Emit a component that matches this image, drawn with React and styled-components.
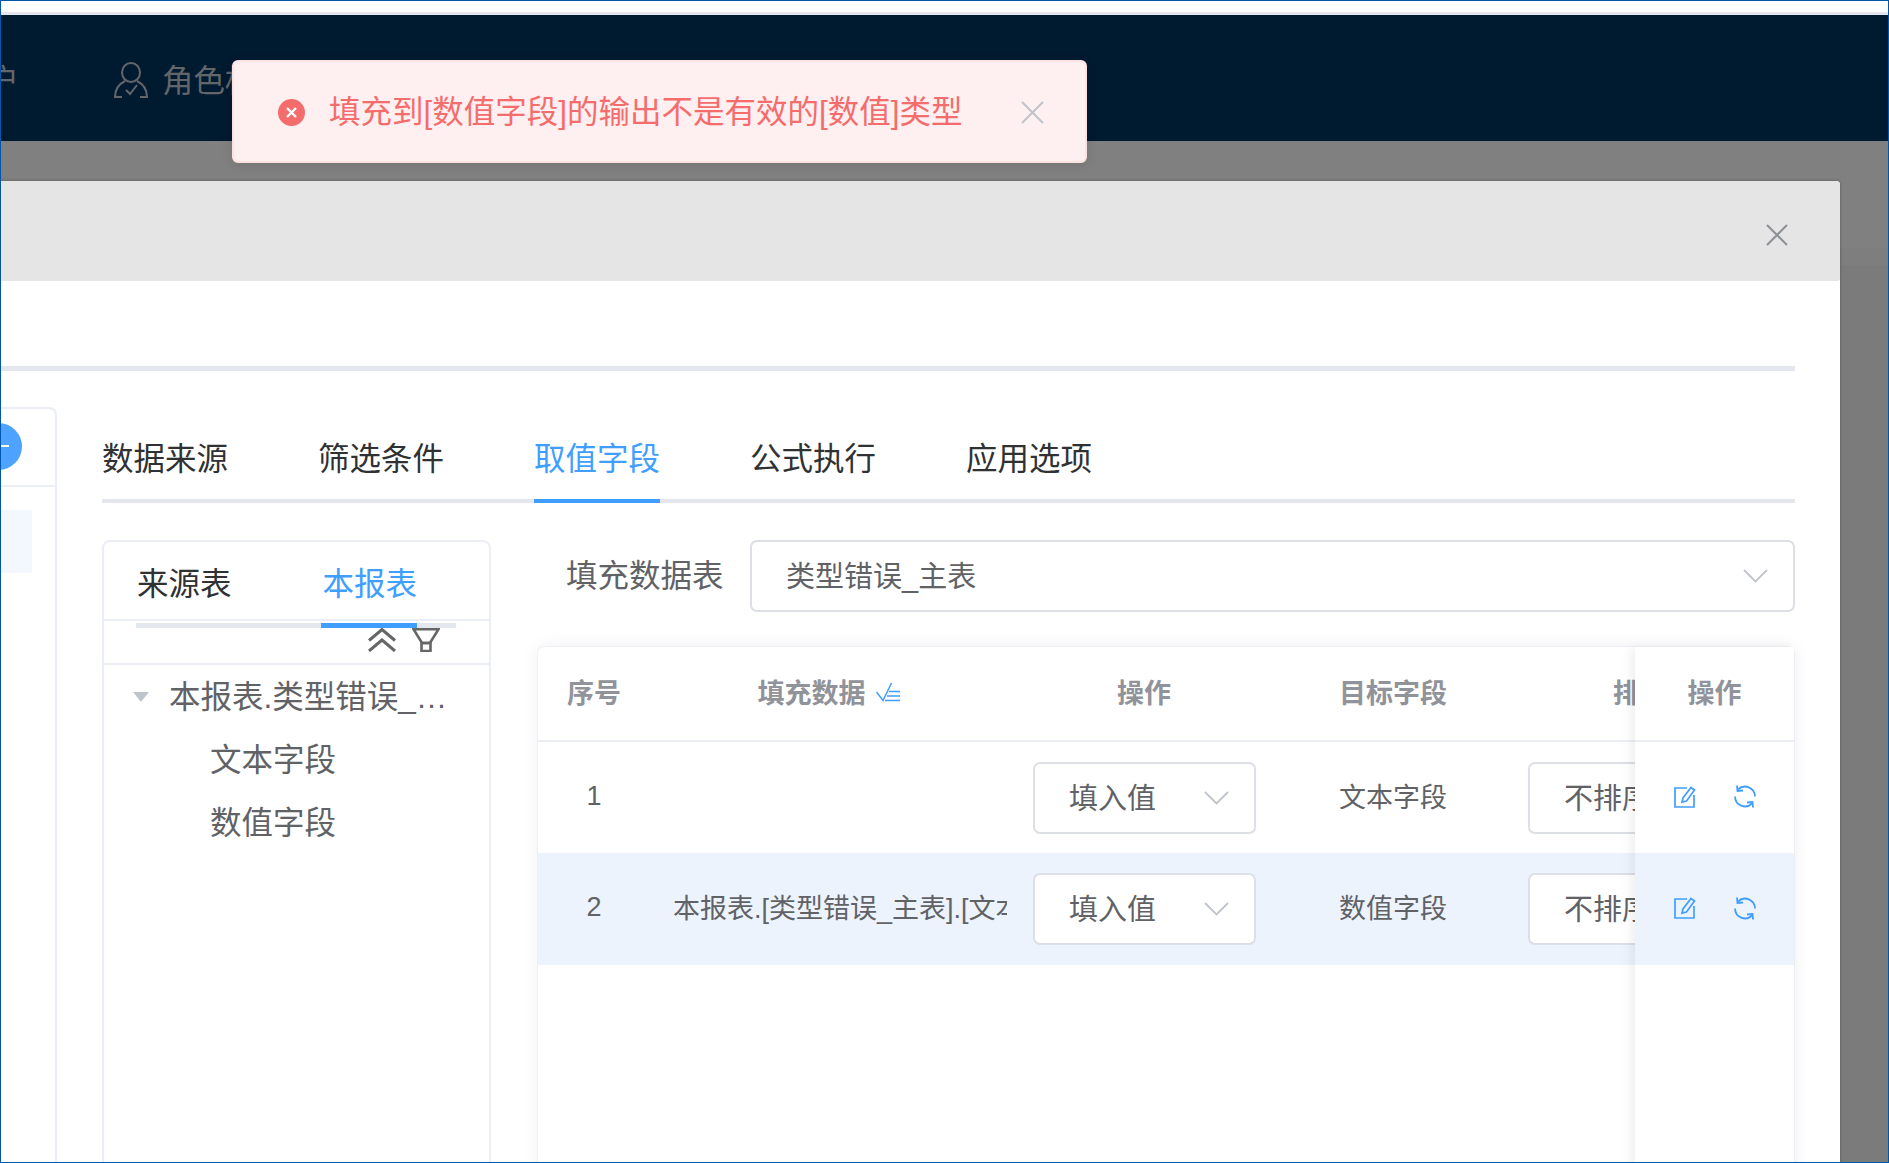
import React from 'react';
import styled, { createGlobalStyle } from 'styled-components';

const GlobalStyle = createGlobalStyle`
  html, body {
    margin: 0;
    padding: 0;
    background: #fff;
  }
  * {
    box-sizing: border-box;
  }
  body {
    font-family: "Liberation Sans", "Noto Sans CJK SC", sans-serif;
    color: #606266;
  }
`;

const Frame = styled.div`
  position: relative;
  width: 1889px;
  height: 1163px;
  border: 1px solid #0056a8;
  overflow: hidden;
  display: flex;
  flex-direction: column;
  background: #fff;
`;

const TopStrip = styled.div`
  height: 14px;
  flex-shrink: 0;
  background: #fff;
  border-bottom: 3px solid #e4e7ed;
`;

const NavBar = styled.nav`
  height: 126px;
  flex-shrink: 0;
  background: #001a30;
  display: flex;
  align-items: center;
  padding-top: 6px;
  color: #62666b;
  font-size: 31.5px;
  line-height: 40px;
`;

const NavItem = styled.div`
  display: flex;
  align-items: center;
  gap: 14px;
  white-space: nowrap;
  margin-left: ${(p) => p.$offset}px;
`;

const NavIcon = styled.span`
  display: flex;
  margin-top: -2px;
`;

const Backdrop = styled.div`
  flex: 1;
  min-height: 0;
  display: flex;
  align-items: flex-start;
  padding: 40px 48px 0 0;
  background: linear-gradient(#808080 0 107px, #7e7e7e 107px 124px, #7b7b7b 124px);
  overflow: hidden;
`;

const Modal = styled.section`
  flex: 1;
  min-width: 0;
  height: 1100px;
  background: #fff;
  border-radius: 0 4px 0 0;
  box-shadow: 0 0 3px rgba(0, 0, 0, 0.35);
`;

const ModalHeader = styled.header`
  height: 100px;
  background: #e5e5e5;
  border-radius: 0 4px 3px 0;
  display: flex;
  align-items: center;
  justify-content: flex-end;
  padding: 8px 52px 0 0;
  color: #8d9096;
`;

const ModalBody = styled.div`
  padding: 85px 45px 0 0;
`;

const Divider = styled.div`
  height: 5px;
  background: #e4e7ed;
`;

const ContentRow = styled.div`
  display: flex;
  margin-top: 36px;
`;

const SidePanel = styled.aside`
  width: 56px;
  flex-shrink: 0;
  height: 760px;
  border-top: 2px solid #ebeef5;
  border-right: 2px solid #ebeef5;
  border-radius: 0 8px 0 0;
`;

const SideHead = styled.div`
  height: 78px;
  padding-bottom: 2px;
  border-bottom: 2px solid #ebeef5;
  display: flex;
  align-items: center;
  overflow: hidden;
`;

const AddButton = styled.div`
  width: 47px;
  height: 47px;
  border-radius: 50%;
  flex-shrink: 0;
  margin-left: -26px;
  background: #4da3ff;
  display: flex;
  align-items: center;
  justify-content: center;
`;

const AddBar = styled.span`
  width: 20px;
  height: 2px;
  background: #fff;
`;

const SideActive = styled.div`
  width: 31px;
  height: 63px;
  margin-top: 23px;
  background: #f3f8fe;
`;

const Main = styled.div`
  flex: 1;
  min-width: 0;
  margin-left: 45px;
`;

const TabList = styled.div`
  height: 96px;
  display: flex;
  gap: 90px;
  border-bottom: 4px solid #e4e7ed;
`;

const Tab = styled.div`
  height: 96px;
  font-size: 31.5px;
  line-height: 104px;
  white-space: nowrap;
  color: ${(p) => (p.$active ? '#409eff' : '#303133')};
  border-bottom: 4px solid ${(p) => (p.$active ? '#409eff' : 'transparent')};
`;

const Panes = styled.div`
  display: flex;
  margin-top: 37px;
`;

const SourceCard = styled.div`
  width: 389px;
  height: 700px;
  flex-shrink: 0;
  border: 2px solid #ebeef5;
  border-radius: 8px 8px 0 0;
`;

const CardTabs = styled.div`
  height: 79px;
  display: flex;
  gap: 91px;
  padding: 7px 0 0 33px;
  align-items: center;
  border-bottom: 2px solid #ebeef5;
`;

const CardTab = styled.div`
  font-size: 31.5px;
  line-height: 40px;
  color: ${(p) => (p.$active ? '#409eff' : '#303133')};
`;

const CardTrack = styled.div`
  height: 5px;
  margin: 2px 33px 0 32px;
  background: #e4e7ed;
`;

const CardThumb = styled.div`
  width: 96px;
  height: 5px;
  margin-left: 185px;
  background: #409eff;
`;

const TreeTools = styled.div`
  height: 37px;
  display: flex;
  justify-content: flex-end;
  gap: 16px;
  padding-right: 49px;
  border-bottom: 2px solid #ebeef5;
  color: #666;
`;

const TreeRow = styled.div`
  height: 63px;
  display: flex;
  align-items: center;
  font-size: 31.5px;
  line-height: 40px;
  color: #606266;
  padding-left: ${(p) => p.$indent}px;
`;

const TreeCaret = styled.span`
  width: 0;
  height: 0;
  flex-shrink: 0;
  margin-right: 20px;
  border-left: 8px solid transparent;
  border-right: 8px solid transparent;
  border-top: 10px solid #c0c4cc;
`;

const TreeLabel = styled.span`
  width: 282px;
  overflow: hidden;
  white-space: nowrap;
  text-overflow: ellipsis;
`;

const RightPane = styled.div`
  flex: 1;
  min-width: 0;
  margin-left: 47px;
`;

const FormRow = styled.div`
  display: flex;
  align-items: center;
  padding-left: 28px;
`;

const FormLabel = styled.label`
  width: 184px;
  flex-shrink: 0;
  font-size: 31.5px;
  line-height: 40px;
  color: #606266;
`;

const Select = styled.div`
  flex: ${(p) => (p.$wide ? 1 : '0 0 223px')};
  height: 72px;
  display: flex;
  align-items: center;
  justify-content: space-between;
  padding: 0 25px 0 34px;
  background: #fff;
  border: 2px solid #dcdfe6;
  border-radius: 7px;
  font-size: 29px;
  color: #606266;
  white-space: nowrap;
`;

const SelectText = styled.span`
  margin-bottom: 4px;
`;

const TableCard = styled.div`
  display: flex;
  height: 560px;
  margin: 35px 1px 0 0;
  border-radius: 6px 6px 0 0;
  background: #fff;
  box-shadow: 0 0 0 1px #eef0f5, 0 0 18px rgba(0, 0, 0, 0.07);
`;

const TableMain = styled.div`
  flex: 1;
  min-width: 0;
  overflow: hidden;
`;

const TableFixed = styled.div`
  width: 159px;
  flex-shrink: 0;
  background: #fff;
  box-shadow: -5px 0 10px rgba(0, 0, 0, 0.06);
  position: relative;
  z-index: 1;
`;

const columns = '112px 369px 250px 248px 246px';

const HeadRow = styled.div`
  display: grid;
  grid-template-columns: ${(p) => p.$cols};
  height: 95px;
  border-bottom: 2px solid #ebeef5;
`;

const BodyRow = styled.div`
  display: grid;
  grid-template-columns: ${(p) => p.$cols};
  height: ${(p) => (p.$selected ? 112 : 111)}px;
  background: ${(p) => (p.$selected ? '#ecf3fd' : '#fff')};
`;

const HeadCell = styled.div`
  display: flex;
  align-items: center;
  justify-content: center;
  gap: 10px;
  padding: 0 ${(p) => p.$pr || 0}px 4px 0;
  font-size: 27px;
  font-weight: 600;
  color: #909399;
  white-space: nowrap;
`;

const Cell = styled.div`
  display: flex;
  align-items: center;
  justify-content: center;
  min-width: 0;
  padding-bottom: 5px;
  font-size: 27px;
  color: #606266;
  white-space: nowrap;
`;

const IndexCell = styled(Cell)`
  padding-bottom: 3px;
`;

const DataCell = styled(Cell)`
  justify-content: flex-start;
  padding: 0 12px 5px 23px;
`;

const DataText = styled.span`
  display: block;
  overflow: hidden;
`;

const SelectCell = styled(Cell)`
  justify-content: flex-start;
  padding: 0 0 0 ${(p) => p.$pl}px;
`;

const ActionCell = styled(Cell)`
  gap: 38px;
  color: #409eff;
  padding: 0 0 2px 0;
`;

const Toast = styled.div`
  position: absolute;
  left: 231px;
  top: 59px;
  z-index: 5;
  width: 855px;
  height: 103px;
  display: flex;
  align-items: center;
  padding: 1px 0 0 44px;
  background: #fef0f0;
  border: 2px solid #fde2e2;
  border-radius: 6px;
  box-shadow: 0 2px 12px rgba(0, 0, 0, 0.1);
`;

const ToastText = styled.span`
  margin-left: 24px;
  font-size: 31.5px;
  line-height: 40px;
  color: #f56c6c;
  white-space: nowrap;
`;

const ToastClose = styled.span`
  display: flex;
  margin-left: 58px;
  color: #c0c4cc;
`;

const Arrow = () => (
  <svg width="25" height="14" viewBox="0 0 25 14" fill="none" stroke="#c0c4cc" strokeWidth="1.8">
    <path d="M1 1l11.5 11.5L24 1" />
  </svg>
);

const CloseIcon = ({ size, width = 2 }) => (
  <svg width={size} height={size} viewBox="0 0 22 22" fill="none" stroke="currentColor" strokeWidth={width}>
    <path d="M1 1l20 20M21 1L1 21" />
  </svg>
);

const UserCheckIcon = () => (
  <svg width="34" height="36" viewBox="0 0 34 36" fill="none" stroke="#62666b" strokeWidth="2">
    <ellipse cx="17" cy="10.5" rx="9" ry="9.5" />
    <path d="M11 19C5 22 1 27 1 35h7M23 19c6 3 10 8 10 16h-7" />
    <path d="M12 28l4 4 7-9" />
  </svg>
);

const ChevronsIcon = () => (
  <svg width="28" height="24" viewBox="0 0 28 24" fill="none" stroke="currentColor" strokeWidth="3">
    <path d="M1 12.5L14 1.5l13 11M1 23l13-11 13 11" />
  </svg>
);

const FunnelIcon = () => (
  <svg width="28" height="24" viewBox="0 0 28 24" fill="none" stroke="currentColor" strokeWidth="2.600">
    <path d="M1.500 1.300h25L18 15H10z" />
    <path d="M9.500 15h9v8h-9z" />
  </svg>
);

const SortIcon = () => (
  <svg width="25" height="20" viewBox="0 0 25 20" fill="none" stroke="#409eff" strokeWidth="1.5">
    <path d="M0.500 10l6.500 8.500L15.500 1" />
    <path d="M13 9.500h11M11 14h13M9 18.500h15" />
  </svg>
);

const EditIcon = () => (
  <svg width="22" height="22" viewBox="0 0 22 22" fill="none" stroke="currentColor" strokeWidth="1.7">
    <path d="M13 2H1v19h19V9" />
    <path d="M8 16l1-4L17 1.500l3.500 2.500L12.500 15z" />
  </svg>
);

const RefreshIcon = () => (
  <svg width="22" height="23" viewBox="0 0 22 23" fill="none" stroke="currentColor" strokeWidth="1.800">
    <path d="M21 11.500A10 10 0 0 0 4 4.500" />
    <path d="M3 0.500l.5 5.500 5.500-.5" />
    <path d="M1 11.500a10 10 0 0 0 17 7" />
    <path d="M19 22.500l-.5-5.500-5.500.5" />
  </svg>
);

const ErrorIcon = () => (
  <svg width="27" height="27" viewBox="0 0 27 27">
    <circle cx="13.500" cy="13.500" r="13.500" fill="#f56c6c" />
    <path d="M9 9l9 9M18 9l-9 9" stroke="#fff" strokeWidth="2.400" fill="none" />
  </svg>
);

const tabs = ['数据来源', '筛选条件', '取值字段', '公式执行', '应用选项'];

const rows = [
  { id: 1, data: '', target: '文本字段' },
  { id: 2, data: '本报表.[类型错误_主表].[文本字段]', target: '数值字段', selected: true },
];

const App = () => {
  return (
    <Frame>
      <GlobalStyle />
      <TopStrip />
      <NavBar>
        <NavItem $offset={-45}>用户</NavItem>
        <NavItem $offset={95}>
          <NavIcon>
            <UserCheckIcon />
          </NavIcon>
          角色权限
        </NavItem>
      </NavBar>
      <Backdrop>
        <Modal>
          <ModalHeader>
            <CloseIcon size={22} />
          </ModalHeader>
          <ModalBody>
            <Divider />
            <ContentRow>
              <SidePanel>
                <SideHead>
                  <AddButton>
                    <AddBar />
                  </AddButton>
                </SideHead>
                <SideActive />
              </SidePanel>
              <Main>
                <TabList>
                  {tabs.map((tab) => (
                    <Tab key={tab} $active={tab === '取值字段'}>
                      {tab}
                    </Tab>
                  ))}
                </TabList>
                <Panes>
                  <SourceCard>
                    <CardTabs>
                      <CardTab>来源表</CardTab>
                      <CardTab $active>本报表</CardTab>
                    </CardTabs>
                    <CardTrack>
                      <CardThumb />
                    </CardTrack>
                    <TreeTools>
                      <ChevronsIcon />
                      <FunnelIcon />
                    </TreeTools>
                    <TreeRow $indent={29}>
                      <TreeCaret />
                      <TreeLabel>本报表.类型错误_主表</TreeLabel>
                    </TreeRow>
                    <TreeRow $indent={106}>文本字段</TreeRow>
                    <TreeRow $indent={106}>数值字段</TreeRow>
                  </SourceCard>
                  <RightPane>
                    <FormRow>
                      <FormLabel>填充数据表</FormLabel>
                      <Select $wide>
                        <SelectText>类型错误_主表</SelectText>
                        <Arrow />
                      </Select>
                    </FormRow>
                    <TableCard>
                      <TableMain>
                        <HeadRow $cols={columns}>
                          <HeadCell>序号</HeadCell>
                          <HeadCell $pr={11}>
                            填充数据
                            <SortIcon />
                          </HeadCell>
                          <HeadCell>操作</HeadCell>
                          <HeadCell>目标字段</HeadCell>
                          <HeadCell>排序</HeadCell>
                        </HeadRow>
                        {rows.map((row) => (
                          <BodyRow key={row.id} $cols={columns} $selected={row.selected}>
                            <IndexCell>{row.id}</IndexCell>
                            <DataCell>
                              <DataText>{row.data}</DataText>
                            </DataCell>
                            <SelectCell $pl={14}>
                              <Select>
                                <SelectText>填入值</SelectText>
                                <Arrow />
                              </Select>
                            </SelectCell>
                            <Cell>{row.target}</Cell>
                            <SelectCell $pl={11}>
                              <Select>
                                <SelectText>不排序</SelectText>
                                <Arrow />
                              </Select>
                            </SelectCell>
                          </BodyRow>
                        ))}
                      </TableMain>
                      <TableFixed>
                        <HeadRow $cols="1fr">
                          <HeadCell>操作</HeadCell>
                        </HeadRow>
                        {rows.map((row) => (
                          <BodyRow key={row.id} $cols="1fr" $selected={row.selected}>
                            <ActionCell>
                              <EditIcon />
                              <RefreshIcon />
                            </ActionCell>
                          </BodyRow>
                        ))}
                      </TableFixed>
                    </TableCard>
                  </RightPane>
                </Panes>
              </Main>
            </ContentRow>
          </ModalBody>
        </Modal>
      </Backdrop>
      <Toast>
        <ErrorIcon />
        <ToastText>填充到[数值字段]的输出不是有效的[数值]类型</ToastText>
        <ToastClose>
          <CloseIcon size={23} />
        </ToastClose>
      </Toast>
    </Frame>
  );
};

export default App;
